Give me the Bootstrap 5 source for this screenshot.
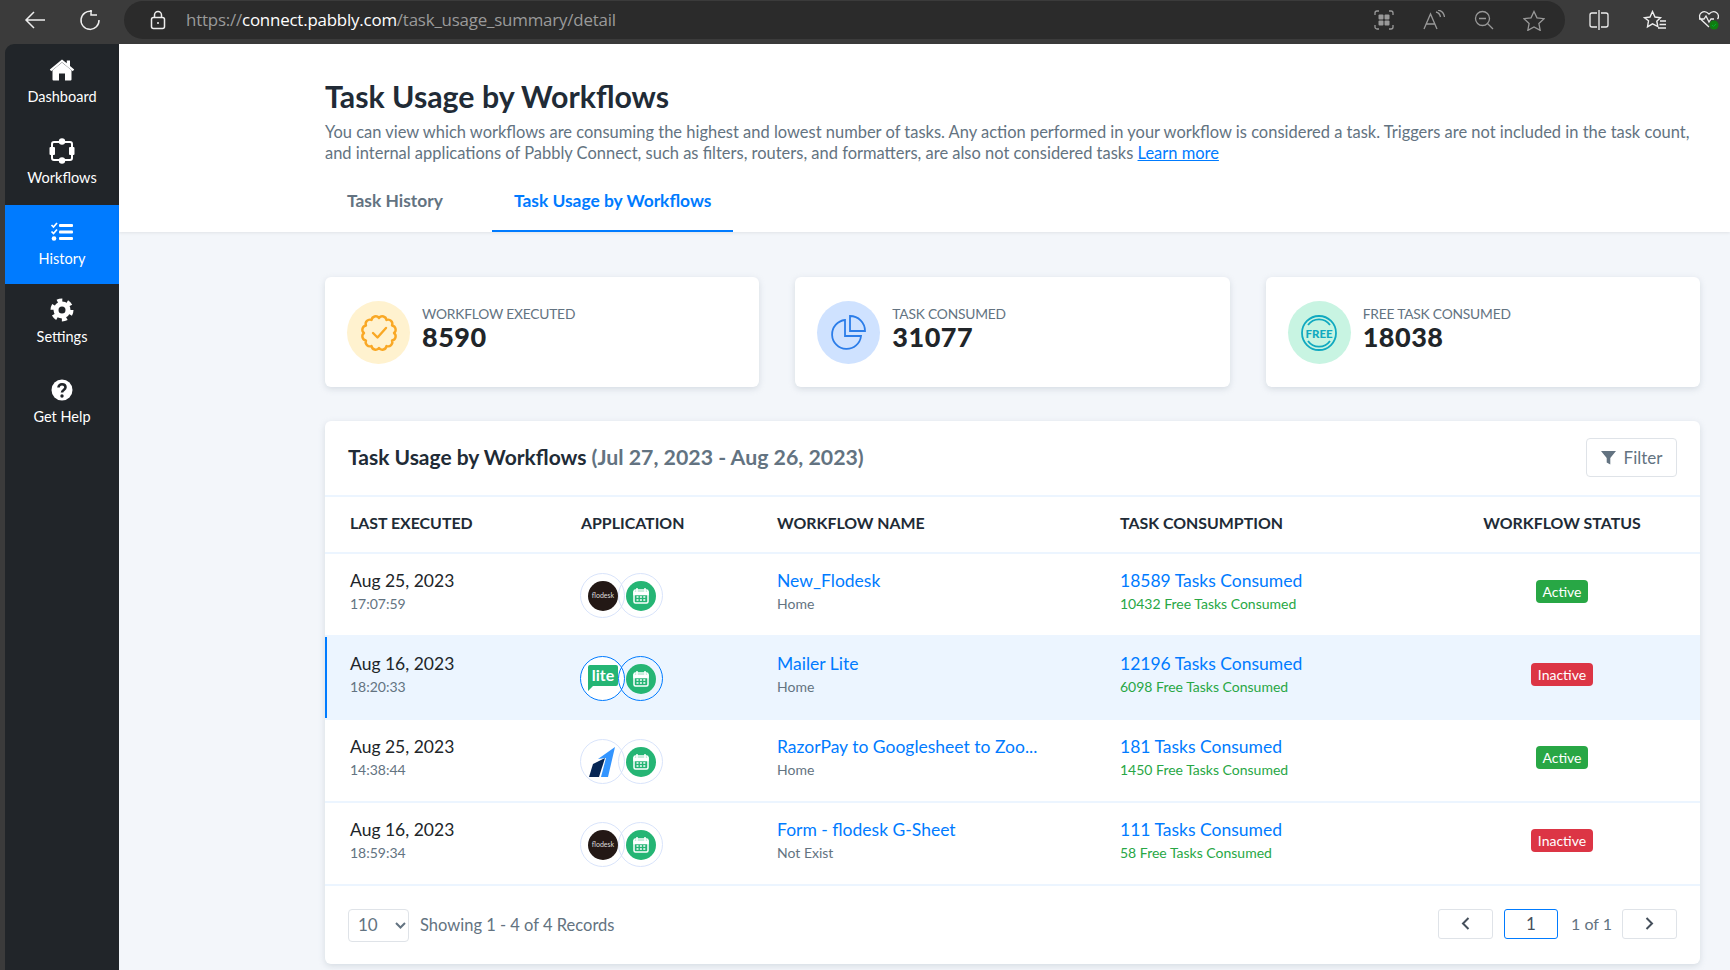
<!DOCTYPE html>
<html lang="en">
<head>
<meta charset="utf-8">
<title>Task Usage by Workflows</title>
<link href="https://cdn.jsdelivr.net/npm/bootstrap@5.3.0/dist/css/bootstrap.min.css" rel="stylesheet">
<style>
html,body{height:970px;overflow:hidden}
body{font-family:Lato,"Liberation Sans",sans-serif;background:#3b3b3b;color:#212529}
.browser-bar{height:44px;background:#3b3b3b;padding:0 0 4px 24px}
.bar-ico{flex:none;display:block}
.reload-ico{margin-left:33px}
.url-pill{margin-left:23px;width:1441px;height:38px;background:#2b2b2b;border-radius:19px;padding:0 20px 0 26px;font-family:"Open Sans","Liberation Sans",sans-serif;font-size:16.9px;letter-spacing:-.2px;color:#9a9a9a}
.url-pill b{font-weight:400;color:#fff}
.pill-icons{gap:29px}
.out-a{margin-left:24px}.out-b{margin-left:34px}.out-c{margin-left:32px}
.app-row{height:926px}
.side-rail{width:114px;margin-left:5px;background:#212529;border-top-left-radius:9px;flex:none}
.side-item{height:80px;padding-top:14px;color:#fff;font-size:14.5px;line-height:18px;text-decoration:none;text-align:center;display:block}
.side-item svg{display:block;margin:0 auto 6px}
.side-item.first-it{height:81px}
.side-item.wf-it{padding-top:13px;height:80px}
.side-item.wf-it svg{margin-bottom:5px}
.side-item.on{background:#007bff;height:79px;padding-top:15px}
.main-pane{background:#f3f6fa;min-width:0}
.top-head{height:188px;background:#fff;padding:34px 30px 0 206px;box-shadow:0 1px 3px rgba(0,0,0,.08)}
.top-head h1{font-size:30.3px;font-weight:700;line-height:36px;margin:0 0 8px;color:#212b36}
.top-head p{font-size:16.48px;line-height:21px;color:#637381;margin:0 0 13px}
.top-head p a{color:#007bff}
.tab-row{gap:27px}
.tab-row a{padding:12px 22px 16px;height:55px;line-height:24px;font-size:17.4px;font-weight:700;color:#637381;text-decoration:none;display:block;white-space:nowrap}
.tab-row a.on{color:#007bff;border-bottom:2px solid #007bff}
.page-body{padding:45px 30px 0 206px}
.stat-box{flex:1 1 0;height:110px;background:#fff;border-radius:6px;box-shadow:0 2px 6px rgba(145,158,171,.3);padding:24px 22px;gap:12px}
.stat-ring{width:63px;height:63px;border-radius:50%;flex:none}
.ring-a{background:#fff2cf}.ring-b{background:#cfe2ff}.ring-c{background:#c8f4e2}
.stat-lbl{font-size:13.8px;line-height:18px;color:#637381;margin-top:4px;letter-spacing:-.2px}
.stat-num{font-size:27px;line-height:29px;font-weight:900;color:#212529;letter-spacing:.5px;margin-top:-1px}
.data-panel{margin-top:34px;height:543px;background:#fff;border-radius:6px;box-shadow:0 2px 6px rgba(145,158,171,.3);overflow:hidden}
.panel-head{height:76px;padding:17px 23px 0 23px;border-bottom:2px solid #ecf5ff}
.panel-head h2{font-size:21px;font-weight:700;line-height:38px;margin:0;color:#212b36}
.panel-head h2 span{color:#637381;font-size:21.3px}
.filter-btn{width:91px;height:39px;border:1px solid #dfe3e8;border-radius:4px;background:#fff;color:#637381;font-size:17px;padding:0;gap:8px}
.wf-table{table-layout:fixed;margin:0;width:1375px}
.wf-table th{font-size:15.9px;font-weight:700;color:#212b36;height:56px;padding:0 0 4px 25px;vertical-align:middle;border-bottom:2px solid #ecf5ff;text-transform:uppercase;background:none;white-space:nowrap}
.wf-table td{height:83px;padding:15px 0 0 25px;vertical-align:top;border-bottom:2px solid #ecf5ff;background:none;box-shadow:none}
.wf-table tr.hi td{background:#ecf5ff}
.wf-table tr.hi td:first-child{box-shadow:inset 2px 0 0 #007bff}
.c-main{font-size:17.5px;line-height:24px;color:#212529;white-space:nowrap}
.c-sub{font-size:14px;line-height:21px;color:#637381;white-space:nowrap}
.c-main a{color:#007bff;text-decoration:none}
.c-free{font-size:14px;line-height:21px;color:#28a745;white-space:nowrap}
.wf-table .ta-c{padding-left:0;text-align:center}
.pill-state{display:inline-block;border-radius:4px;color:#fff;font-size:14px;line-height:23px;padding:0 6.5px;margin-top:11px}
.st-on{background:#28a745}.st-off{background:#dc3545}
.app-pair{margin-top:4px;margin-left:-1px}
.app-disc{width:45px;height:45px;border:1px solid #d9e4fb;border-radius:50%;background:#fff;flex:none}
.app-disc+.app-disc{margin-left:-7px;background:transparent}
tr.hi .app-disc{border-color:#007bff}
.panel-foot{height:78px;padding:0 23px;font-size:16.5px;color:#637381}
.per-page{width:61px;height:33px;border:1px solid #dfe3e8;border-radius:4px;padding:0 0 0 9px;color:#637381;font-size:17px;gap:17px;margin-right:11px}
.pg-group{margin-bottom:3px}
.pg-btn{width:55px;height:30px;border:1px solid #dfe3e8;border-radius:3px;background:#fff;padding:0}
.pg-cur{width:54px;height:30px;border:1px solid #007bff;border-radius:3px;color:#454f5b;font-size:17px;margin:0 13px 0 11px}
.pg-txt{margin-right:10px;font-size:16px}
</style>
</head>
<body>
<div class="browser-bar d-flex align-items-center">
  <svg class="bar-ico" width="22" height="20" viewBox="0 0 22 20" fill="none" stroke="#eee" stroke-width="1.5"><path d="M21 10H2M10 2 2 10l8 8"/></svg>
  <svg class="bar-ico reload-ico" width="22" height="22" viewBox="0 0 22 22" fill="none" stroke="#eee" stroke-width="1.5"><path d="M13 2.600A9 9 0 1 0 20 11M12 1v5h6"/></svg>
  <div class="url-pill d-flex align-items-center">
    <svg class="bar-ico me-3" width="16" height="20" viewBox="0 0 16 20" fill="none" stroke="#eee" stroke-width="1.5"><rect x="1.500" y="7.500" width="13" height="11" rx="2"/><path d="M4.500 7.500V5a3.500 3.500 0 0 1 7 0v2.500"/><circle cx="8" cy="13" r="1" fill="#eee" stroke="none"/></svg>
    <span class="ms-1"><span>https://</span><b>connect.pabbly.com</b><span>/task_usage_summary/detail</span></span>
    <div class="ms-auto d-flex align-items-center pill-icons">
      <svg class="bar-ico" width="20" height="20" viewBox="0 0 20 20" fill="none" stroke="#999" stroke-width="1.300"><path d="M1 5V3a2 2 0 0 1 2-2h2M15 1h2a2 2 0 0 1 2 2v2M19 15v2a2 2 0 0 1-2 2h-2M5 19H3a2 2 0 0 1-2-2v-2"/><g fill="#999" stroke="none"><rect x="4.500" y="4.500" width="5" height="5" rx="1"/><rect x="10.500" y="4.500" width="5" height="5" rx="1"/><rect x="4.500" y="10.500" width="5" height="5" rx="1"/><rect x="10.500" y="10.500" width="5" height="5" rx="1"/></g></svg>
      <svg class="bar-ico" width="22" height="20" viewBox="0 0 22 20" fill="none" stroke="#999" stroke-width="1.300"><path d="M1 19 7.500 4 14 19M3.500 14h8M13 2c2.500.6 4 2.500 4.500 5M15 0c3.500.6 6 3.500 6.500 7"/></svg>
      <svg class="bar-ico" width="20" height="20" viewBox="0 0 20 20" fill="none" stroke="#999" stroke-width="1.300"><circle cx="8.500" cy="8.500" r="7"/><path d="M5 8.500h7M13.500 13.500 19 19"/></svg>
      <svg class="bar-ico" width="22" height="21" viewBox="0 0 22 21" fill="none" stroke="#999" stroke-width="1.300"><path d="m11 1.500 3 6.300 7 .9-5.100 4.800 1.300 6.900L11 17l-6.200 3.400 1.300-6.900L1 8.700l7-.9z"/></svg>
    </div>
  </div>
  <svg class="bar-ico out-a" width="20" height="20" viewBox="0 0 20 20" fill="none" stroke="#eee" stroke-width="1.300"><path d="M8 3H3a2 2 0 0 0-2 2v10a2 2 0 0 0 2 2h5M12 3h5a2 2 0 0 1 2 2v10a2 2 0 0 1-2 2h-5M10 0v20"/></svg>
  <svg class="bar-ico out-b" width="23" height="21" viewBox="0 0 23 21" fill="none" stroke="#eee" stroke-width="1.400"><path d="m9.500 1.500 2.500 5.500 5.500.7-3.700 3.500 1 5.300-5.300-2.700-5 3 1-6L1.500 7.700 7 7zM17 11h6M16.500 14.500H23M15 18h8"/></svg>
  <svg class="bar-ico out-c" width="22" height="22" viewBox="0 0 22 22" fill="none" stroke="#eee" stroke-width="1.300"><path d="M11 18 2.500 10C-1 5.500 5.500-.5 11 5c5.500-5.500 12 .5 8.500 5M1 10h5l2-3 3 6 2-3h3"/><circle cx="16" cy="16" r="4.500" fill="#107c10" stroke="none"/><path d="m14 16 1.500 1.500 2.500-2.500" stroke="#0a3" stroke-width="1"/></svg>
</div>
<div class="app-row d-flex">
  <nav class="side-rail">
    <a class="side-item first-it" href="#"><svg width="26" height="24" viewBox="0 0 26 24" fill="#fff"><path d="M13 4.500 3.500 12.300V21.500a1 1 0 0 0 1 1H10v-7h6v7h5.500a1 1 0 0 0 1-1v-9.200z"/><path d="M13 1.500.8 11.500l1.400 1.700L13 4.300l10.800 8.900 1.400-1.700-4.200-3.400V2.500h-3.200v2.700z"/></svg>Dashboard</a>
    <a class="side-item wf-it" href="#"><svg width="26" height="26" viewBox="0 0 26 26" fill="none" stroke="#fff" stroke-width="2"><rect x="3" y="4" width="20" height="18" rx="2"/><g fill="#fff" stroke="none"><circle cx="13" cy="3.500" r="3.200"/><circle cx="13" cy="22.500" r="3.200"/><rect x="0.500" y="9" width="5.500" height="8" rx="1"/><rect x="20" y="9" width="5.500" height="8" rx="1"/></g></svg>Workflows</a>
    <a class="side-item on" href="#"><svg width="24" height="24" viewBox="0 0 24 24" fill="#fff"><rect x="9" y="4" width="14" height="3" rx="1"/><rect x="9" y="10.500" width="14" height="3" rx="1"/><rect x="9" y="17" width="14" height="3" rx="1"/><circle cx="4" cy="18.500" r="2.300"/><path d="M1.500 5 3.500 7 7 3M1.500 11.500l2 2L7 9.500" fill="none" stroke="#fff" stroke-width="1.700"/></svg>History</a>
    <a class="side-item" href="#"><svg width="24" height="24" viewBox="0 0 24 24"><circle cx="12" cy="12" r="6" fill="none" stroke="#fff" stroke-width="5"/><circle cx="12" cy="12" r="9.500" fill="none" stroke="#fff" stroke-width="4" stroke-dasharray="5 4.950"/></svg>Settings</a>
    <a class="side-item" href="#"><svg width="24" height="24" viewBox="0 0 24 24"><circle cx="12" cy="12" r="10.500" fill="#fff"/><path d="M8.500 9.500C8.500 7.500 10 6.300 12 6.300s3.500 1.200 3.500 3c0 2.800-3.500 2.500-3.500 5.200" fill="none" stroke="#212529" stroke-width="2.600"/><circle cx="12" cy="18" r="1.700" fill="#212529"/></svg>Get Help</a>
  </nav>
  <div class="main-pane flex-grow-1">
    <header class="top-head">
      <h1>Task Usage by Workflows</h1>
      <p>You can view which workflows are consuming the highest and lowest number of tasks. Any action performed in your workflow is considered a task. Triggers are not included in the task count, and internal applications of Pabbly Connect, such as filters, routers, and formatters, are also not considered tasks <a href="#">Learn more</a></p>
      <div class="tab-row d-flex"><a href="#">Task History</a><a class="on" href="#">Task Usage by Workflows</a></div>
    </header>
    <div class="page-body">
      <div class="d-flex" style="gap:36px">
        <div class="stat-box d-flex align-items-start">
          <div class="stat-ring ring-a d-flex align-items-center justify-content-center"><svg width="40" height="40" viewBox="0 0 40 40" fill="none" stroke="#f9a825" stroke-width="2.400" stroke-linecap="round" stroke-linejoin="round"><path d="M35 20A4.200 4.200 0 0 1 33 27.500 4.200 4.200 0 0 1 27.500 33 4.200 4.200 0 0 1 20 35 4.200 4.200 0 0 1 12.500 33 4.200 4.200 0 0 1 7 27.500 4.200 4.200 0 0 1 5 20 4.200 4.200 0 0 1 7 12.500 4.200 4.200 0 0 1 12.500 7 4.200 4.200 0 0 1 20 5 4.200 4.200 0 0 1 27.500 7 4.200 4.200 0 0 1 33 12.500 4.200 4.200 0 0 1 35 20z"/><path d="m14 20 4.500 4.500L27 15"/></svg></div>
          <div><div class="stat-lbl">WORKFLOW EXECUTED</div><div class="stat-num">8590</div></div>
        </div>
        <div class="stat-box d-flex align-items-start">
          <div class="stat-ring ring-b d-flex align-items-center justify-content-center"><svg width="38" height="38" viewBox="0 0 38 38" fill="none" stroke="#2b7de9" stroke-width="1.800"><path d="M15 6A14.500 14.500 0 1 0 31 22H15z"/><path d="M20 2a15 15 0 0 1 15 15H20z"/></svg></div>
          <div><div class="stat-lbl">TASK CONSUMED</div><div class="stat-num">31077</div></div>
        </div>
        <div class="stat-box d-flex align-items-start">
          <div class="stat-ring ring-c d-flex align-items-center justify-content-center"><svg width="38" height="38" viewBox="0 0 38 38" fill="none" stroke="#10a9c0" stroke-width="1.800"><circle cx="19" cy="19" r="17"/><path d="M8 11a13.500 13.500 0 0 1 22 0M8 27a13.500 13.500 0 0 0 22 0"/><text x="19" y="23.500" text-anchor="middle" font-family="Lato,sans-serif" font-size="11.500" font-weight="900" fill="#10a9c0" stroke="none">FREE</text></svg></div>
          <div><div class="stat-lbl">FREE TASK CONSUMED</div><div class="stat-num">18038</div></div>
        </div>
      </div>
      <section class="data-panel">
        <div class="panel-head d-flex justify-content-between align-items-start">
          <h2>Task Usage by Workflows <span>(Jul 27, 2023 - Aug 26, 2023)</span></h2>
          <button class="filter-btn d-flex align-items-center justify-content-center" type="button"><svg width="15" height="15" viewBox="0 0 15 15" fill="#637381"><path d="M0 1h15L9.300 8v6.500L5.700 12.500V8z"/></svg>Filter</button>
        </div>
        <table class="table wf-table">
          <colgroup><col style="width:231px"><col style="width:196px"><col style="width:343px"><col style="width:329px"><col style="width:276px"></colgroup>
          <thead><tr><th>Last Executed</th><th>Application</th><th>Workflow Name</th><th>Task Consumption</th><th class="ta-c">Workflow Status</th></tr></thead>
          <tbody>
            <tr>
              <td><div class="c-main">Aug 25, 2023</div><div class="c-sub">17:07:59</div></td>
              <td><div class="app-pair d-flex">
                <div class="app-disc d-flex align-items-center justify-content-center"><svg width="30" height="30" viewBox="0 0 30 30"><circle cx="15" cy="15" r="15" fill="#231815"/><text x="15" y="17" text-anchor="middle" font-family="Lato,sans-serif" font-size="7" fill="#ddd">flodesk</text></svg></div>
                <div class="app-disc d-flex align-items-center justify-content-center"><svg width="30" height="30" viewBox="0 0 30 30"><circle cx="15" cy="15" r="15" fill="#25b574"/><rect x="8" y="9" width="14" height="13" rx="1.500" fill="none" stroke="#fff" stroke-width="1.500"/><path d="M8 11h14v2.500H8zM11 7v4M19 7v4" stroke="#fff" stroke-width="1.500" fill="#fff"/><path d="M10.500 16h9M10.500 19h9" stroke="#fff" stroke-width="1.600" stroke-dasharray="2 1.400"/></svg></div>
              </div></td>
              <td><div class="c-main"><a href="#">New_Flodesk</a></div><div class="c-sub">Home</div></td>
              <td><div class="c-main"><a href="#">18589 Tasks Consumed</a></div><div class="c-free">10432 Free Tasks Consumed</div></td>
              <td class="ta-c"><span class="pill-state st-on">Active</span></td>
            </tr>
            <tr class="hi">
              <td><div class="c-main">Aug 16, 2023</div><div class="c-sub">18:20:33</div></td>
              <td><div class="app-pair d-flex">
                <div class="app-disc d-flex align-items-center justify-content-center"><svg width="32" height="32" viewBox="0 0 32 32"><path d="M3 2h26a2 2 0 0 1 2 2v17a2 2 0 0 1-2 2H6l-5 5V4a2 2 0 0 1 2-2z" fill="#25b574"/><text x="16" y="18" text-anchor="middle" font-family="Lato,sans-serif" font-size="16" font-weight="700" fill="#fff">lite</text></svg></div>
                <div class="app-disc d-flex align-items-center justify-content-center"><svg width="30" height="30" viewBox="0 0 30 30"><circle cx="15" cy="15" r="15" fill="#25b574"/><rect x="8" y="9" width="14" height="13" rx="1.500" fill="none" stroke="#fff" stroke-width="1.500"/><path d="M8 11h14v2.500H8zM11 7v4M19 7v4" stroke="#fff" stroke-width="1.500" fill="#fff"/><path d="M10.500 16h9M10.500 19h9" stroke="#fff" stroke-width="1.600" stroke-dasharray="2 1.400"/></svg></div>
              </div></td>
              <td><div class="c-main"><a href="#">Mailer Lite</a></div><div class="c-sub">Home</div></td>
              <td><div class="c-main"><a href="#">12196 Tasks Consumed</a></div><div class="c-free">6098 Free Tasks Consumed</div></td>
              <td class="ta-c"><span class="pill-state st-off">Inactive</span></td>
            </tr>
            <tr>
              <td><div class="c-main">Aug 25, 2023</div><div class="c-sub">14:38:44</div></td>
              <td><div class="app-pair d-flex">
                <div class="app-disc d-flex align-items-center justify-content-center"><svg width="30" height="32" viewBox="0 0 30 32"><path d="M1 31 5 18 17 12 11 31z" fill="#072654"/><path d="M10 13 27 1 20 31H13l5-19z" fill="#3395ff"/></svg></div>
                <div class="app-disc d-flex align-items-center justify-content-center"><svg width="30" height="30" viewBox="0 0 30 30"><circle cx="15" cy="15" r="15" fill="#25b574"/><rect x="8" y="9" width="14" height="13" rx="1.500" fill="none" stroke="#fff" stroke-width="1.500"/><path d="M8 11h14v2.500H8zM11 7v4M19 7v4" stroke="#fff" stroke-width="1.500" fill="#fff"/><path d="M10.500 16h9M10.500 19h9" stroke="#fff" stroke-width="1.600" stroke-dasharray="2 1.400"/></svg></div>
              </div></td>
              <td><div class="c-main"><a href="#">RazorPay to Googlesheet to Zoo...</a></div><div class="c-sub">Home</div></td>
              <td><div class="c-main"><a href="#">181 Tasks Consumed</a></div><div class="c-free">1450 Free Tasks Consumed</div></td>
              <td class="ta-c"><span class="pill-state st-on">Active</span></td>
            </tr>
            <tr>
              <td><div class="c-main">Aug 16, 2023</div><div class="c-sub">18:59:34</div></td>
              <td><div class="app-pair d-flex">
                <div class="app-disc d-flex align-items-center justify-content-center"><svg width="30" height="30" viewBox="0 0 30 30"><circle cx="15" cy="15" r="15" fill="#231815"/><text x="15" y="17" text-anchor="middle" font-family="Lato,sans-serif" font-size="7" fill="#ddd">flodesk</text></svg></div>
                <div class="app-disc d-flex align-items-center justify-content-center"><svg width="30" height="30" viewBox="0 0 30 30"><circle cx="15" cy="15" r="15" fill="#25b574"/><rect x="8" y="9" width="14" height="13" rx="1.500" fill="none" stroke="#fff" stroke-width="1.500"/><path d="M8 11h14v2.500H8zM11 7v4M19 7v4" stroke="#fff" stroke-width="1.500" fill="#fff"/><path d="M10.500 16h9M10.500 19h9" stroke="#fff" stroke-width="1.600" stroke-dasharray="2 1.400"/></svg></div>
              </div></td>
              <td><div class="c-main"><a href="#">Form - flodesk G-Sheet</a></div><div class="c-sub">Not Exist</div></td>
              <td><div class="c-main"><a href="#">111 Tasks Consumed</a></div><div class="c-free">58 Free Tasks Consumed</div></td>
              <td class="ta-c"><span class="pill-state st-off">Inactive</span></td>
            </tr>
          </tbody>
        </table>
        <div class="panel-foot d-flex align-items-center">
          <div class="per-page d-flex align-items-center"><span>10</span><svg width="11" height="7" viewBox="0 0 11 7" fill="none" stroke="#637381" stroke-width="2"><path d="m1 1 4.500 4.500L10 1"/></svg></div>
          <span>Showing 1 - 4 of 4 Records</span>
          <div class="ms-auto d-flex align-items-center pg-group">
            <button class="pg-btn d-flex align-items-center justify-content-center" type="button"><svg width="9" height="13" viewBox="0 0 9 13" fill="none" stroke="#454f5b" stroke-width="2"><path d="M7.500 1 2 6.500 7.500 12"/></svg></button>
            <div class="pg-cur d-flex align-items-center justify-content-center">1</div>
            <span class="pg-txt">1 of 1</span>
            <button class="pg-btn d-flex align-items-center justify-content-center" type="button"><svg width="9" height="13" viewBox="0 0 9 13" fill="none" stroke="#454f5b" stroke-width="2"><path d="M1.500 1 7 6.500 1.500 12"/></svg></button>
          </div>
        </div>
      </section>
    </div>
  </div>
</div>
<script src="https://cdn.jsdelivr.net/npm/bootstrap@5.3.0/dist/js/bootstrap.bundle.min.js"></script>
</body>
</html>
